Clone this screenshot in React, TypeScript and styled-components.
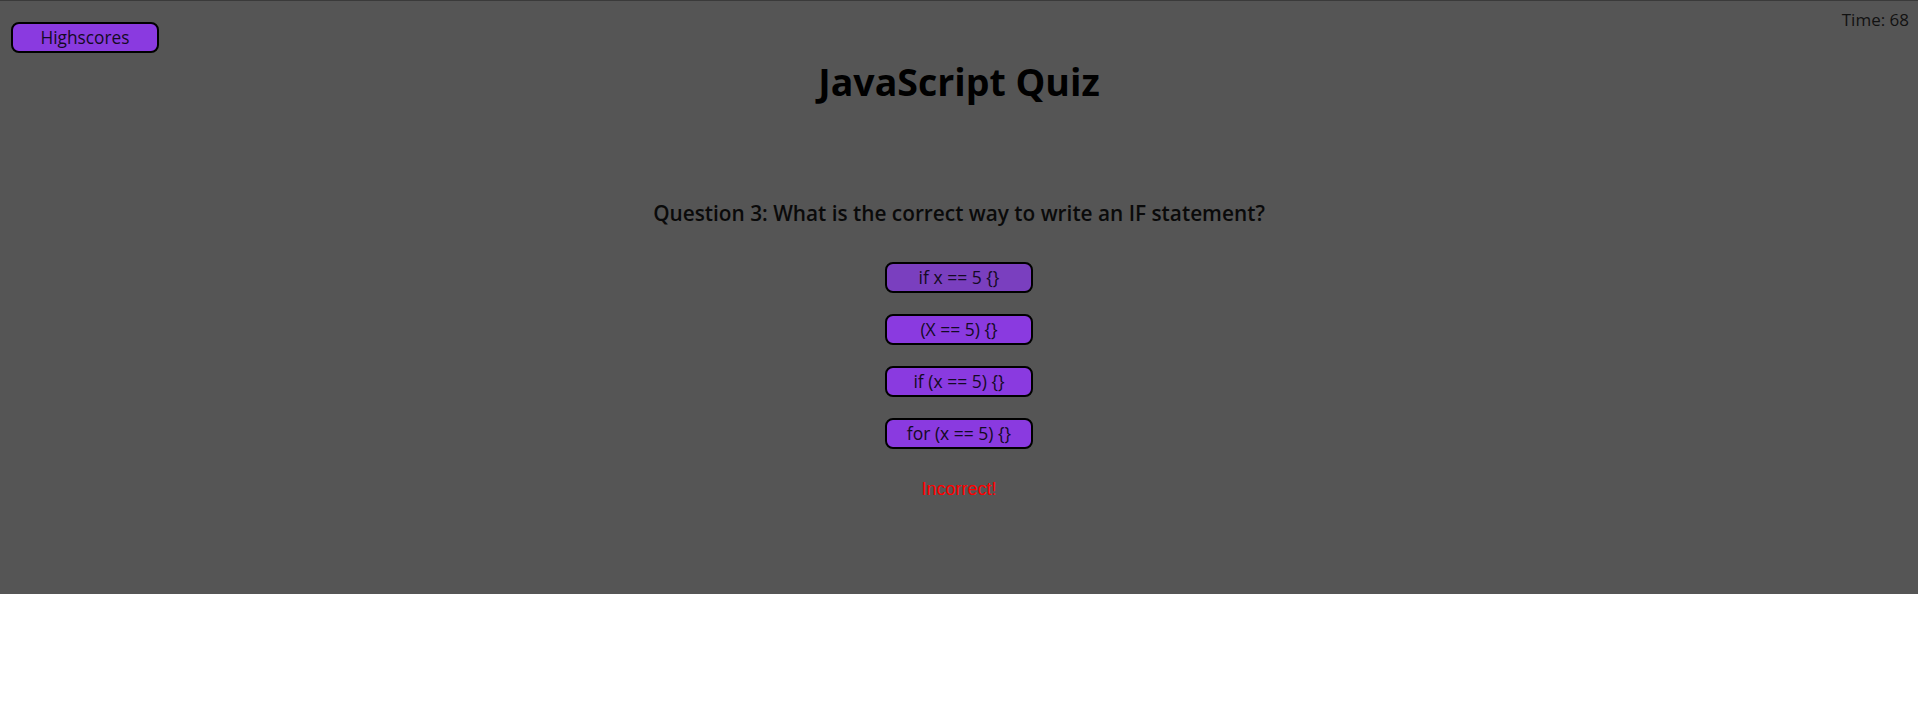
import React from "react";
import styled, { createGlobalStyle } from "styled-components";

const GlobalStyle = createGlobalStyle`
  html, body { margin: 0; padding: 0; background: #ffffff; }
  body { font-family: "Open Sans", "Liberation Sans", sans-serif; }
  * { box-sizing: border-box; }
`;

const Page = styled.main`
  height: 594px;
  background: #555555;
  border-top: 1px solid #3a3a3a;
  display: flex;
  flex-direction: column;
  align-items: center;
`;

const Header = styled.header`
  align-self: stretch;
  display: flex;
  justify-content: space-between;
  align-items: flex-start;
  padding: 0 9px 0 11px;
`;

const Button = styled.button<{ $tone?: "hover" | "normal" }>`
  width: 148px;
  height: 31px;
  border: 2px solid #000000;
  border-radius: 8px;
  background: ${(p) => (p.$tone === "hover" ? "#7a3fbf" : "#8a3ae0")};
  color: #140a24;
  font-family: "Open Sans", "Liberation Sans", sans-serif;
  font-size: 17.5px;
  line-height: 1;
  padding: 0;
  display: flex;
  align-items: center;
  justify-content: center;
  cursor: pointer;
`;

const HighscoreButton = styled(Button)`
  margin-top: 21px;
  font-size: 17.3px;
`;

const Timer = styled.div`
  font-size: 17px;
  line-height: 24px;
  margin-top: 7px;
  color: #111111;
`;

const Title = styled.h1`
  margin: 5px 0 0;
  font-size: 37.5px;
  line-height: 48px;
  font-weight: 700;
  color: #000000;
`;

const Question = styled.h2`
  margin: 92px 0 0;
  font-size: 20.8px;
  line-height: 30px;
  font-weight: 600;
  color: #0a0a0a;
`;

const Answers = styled.div`
  margin-top: 34px;
  display: flex;
  flex-direction: column;
  gap: 21px;
`;

const Feedback = styled.p`
  margin: 29px 0 0;
  font-family: "Liberation Sans", Arial, sans-serif;
  font-size: 18px;
  line-height: 22px;
  color: #ff0000;
`;

const answers = ["if x == 5 {}", "(X == 5) {}", "if (x == 5) {}", "for (x == 5) {}"];

export default function App() {
  return (
    <>
      <GlobalStyle />
      <Page>
        <Header>
          <HighscoreButton>Highscores</HighscoreButton>
          <Timer>Time: 68</Timer>
        </Header>
        <Title>JavaScript Quiz</Title>
        <Question>Question 3: What is the correct way to write an IF statement?</Question>
        <Answers>
          {answers.map((a, i) => (
            <Button key={a} $tone={i === 0 ? "hover" : "normal"}>
              {a}
            </Button>
          ))}
        </Answers>
        <Feedback>Incorrect!</Feedback>
      </Page>
    </>
  );
}
